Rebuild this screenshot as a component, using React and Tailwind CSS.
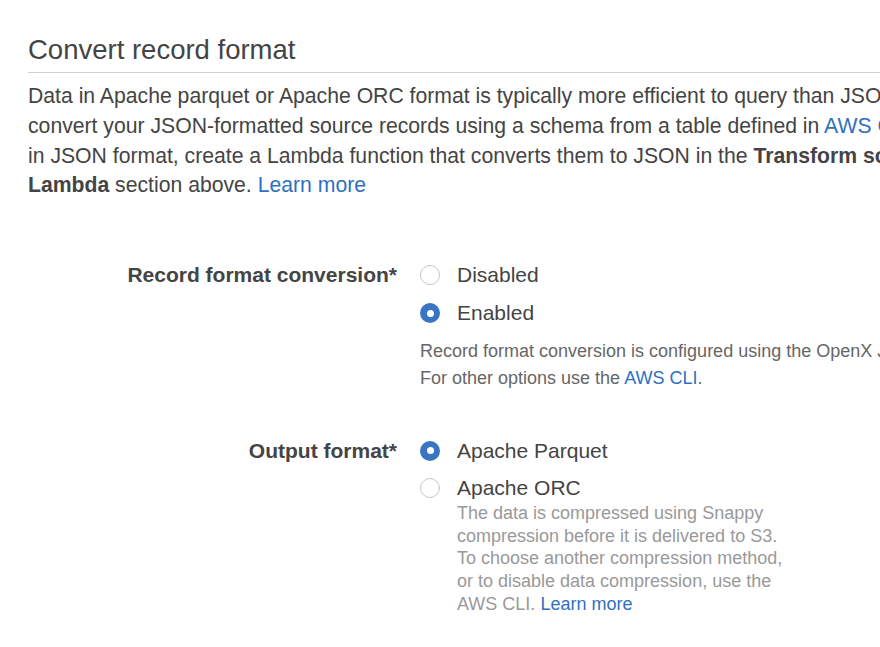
import React from 'react';

const FONT = { fontFamily: '"Liberation Sans", Arial, Helvetica, sans-serif' };

function Radio({ checked }) {
    return checked ? (
        <span className="flex h-[20px] w-[20px] flex-shrink-0 items-center justify-center rounded-full bg-[#3a75c4]">
            <span className="h-[7px] w-[7px] rounded-full bg-white" />
        </span>
    ) : (
        <span className="h-[20px] w-[20px] flex-shrink-0 rounded-full border border-[#c6c6c6] bg-white" />
    );
}

function Option({ label, checked, rowClass = 'h-[38px]' }) {
    return (
        <div className={`flex items-center gap-[17px] ${rowClass}`}>
            <Radio checked={checked} />
            <span className="text-[21px] text-[#444]">{label}</span>
        </div>
    );
}

function Field({ label, children, className = '' }) {
    return (
        <div className={`grid grid-cols-[397px_1fr] gap-x-[23px] ${className}`}>
            <div className="flex h-[38px] items-center justify-end">
                <span className="text-[21px] font-bold text-[#444]">{label}</span>
            </div>
            <div>{children}</div>
        </div>
    );
}

export default function App() {
    return (
        <div className="h-[647px] w-[880px] overflow-hidden bg-white" style={FONT}>
            <div className="w-[1200px]">
                {/* Heading */}
                <div className="ml-[28px] border-b border-[#cfcfcf] pt-[33px] pb-[6px]">
                    <h2 className="text-[27.5px] leading-[33px] text-[#444]">Convert record format</h2>
                </div>

                {/* Description */}
                <div className="ml-[28px] mt-[8px] whitespace-nowrap text-[21.2px] leading-[29.8px] text-[#444]">
                    <div>Data in Apache parquet or Apache ORC format is typically more efficient to query than JSON. Kinesis Data Firehose can</div>
                    <div>
                        convert your JSON-formatted source records using a schema from a table defined in{' '}
                        <span className="text-[#3070c0]">AWS Glue</span>. For records that aren't
                    </div>
                    <div>
                        in JSON format, create a Lambda function that converts them to JSON in the{' '}
                        <b className="font-bold">Transform source records with AWS</b>
                    </div>
                    <div>
                        <b className="font-bold">Lambda</b> section above.{' '}
                        <span className="text-[#3070c0]">Learn more</span>
                    </div>
                </div>

                {/* Record format conversion */}
                <Field label="Record format conversion*" className="mt-[56px]">
                    <Option label="Disabled" />
                    <Option label="Enabled" checked />
                    <p className="mt-[6px] whitespace-nowrap text-[18px] leading-[27px] text-[#666]">
                        Record format conversion is configured using the OpenX JSON SerDe and the Apache Hive deserializer.
                        <br />
                        For other options use the <span className="text-[#3070c0]">AWS CLI</span>.
                    </p>
                </Field>

                {/* Output format */}
                <Field label="Output format*" className="mt-[40px]">
                    <Option label="Apache Parquet" checked rowClass="h-[37px]" />
                    <Option label="Apache ORC" rowClass="h-[37px]" />
                    <p className="-mt-[4px] ml-[37px] w-[336px] text-[18px] leading-[22.6px] text-[#999]">
                        The data is compressed using Snappy compression before it is delivered to S3. To choose another
                        compression method, or to disable data compression, use the AWS CLI.{' '}
                        <span className="text-[#3070c0]">Learn more</span>
                    </p>
                </Field>
            </div>
        </div>
    );
}
